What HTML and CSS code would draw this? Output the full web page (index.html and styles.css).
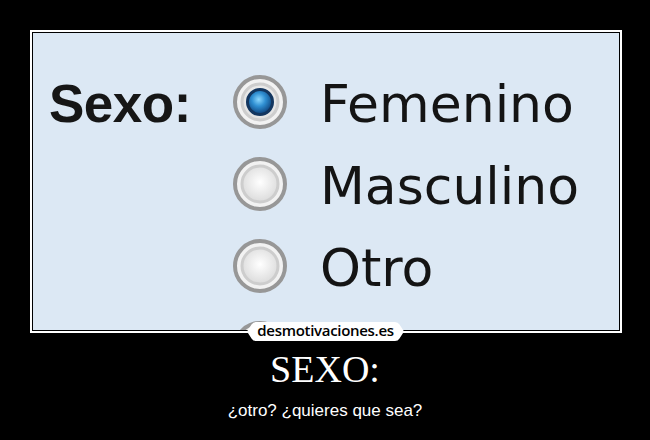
FILE: index.html
```html
<!DOCTYPE html>
<html lang="es">
<head>
<meta charset="utf-8">
<title>SEXO:</title>
<link rel="stylesheet" href="styles.css">
</head>
<body>
<div class="poster">
  <div class="frame">
    <div class="photo">
      <div class="form">
        <div class="label">Sexo:</div>
        <svg class="radio" viewBox="0 0 54 54" width="54" height="54">
          <defs>
            <radialGradient id="in1" cx="50%" cy="45%" r="60%"><stop offset="0" stop-color="#ffffff"/><stop offset="1" stop-color="#dcdcdc"/></radialGradient>
            <radialGradient id="blue" cx="45%" cy="40%" r="60%"><stop offset="0" stop-color="#8cd8ff"/><stop offset="0.45" stop-color="#2f8fd2"/><stop offset="1" stop-color="#0d3f78"/></radialGradient>
          </defs>
          <circle cx="27" cy="27" r="25" fill="#f2f2f2" stroke="#979797" stroke-width="4"/>
          <circle cx="27" cy="27" r="18" fill="url(#in1)" stroke="#cdcdcd" stroke-width="3"/>
          <circle cx="27" cy="27" r="12.5" fill="url(#blue)" stroke="#13365f" stroke-width="3"/>
        </svg>
        <div class="opt">Femenino</div>

        <div class="label"></div>
        <svg class="radio" viewBox="0 0 54 54" width="54" height="54">
          <defs><radialGradient id="in2" cx="50%" cy="45%" r="60%"><stop offset="0" stop-color="#ffffff"/><stop offset="1" stop-color="#d8d8d8"/></radialGradient></defs>
          <circle cx="27" cy="27" r="25" fill="#f2f2f2" stroke="#979797" stroke-width="4"/>
          <circle cx="27" cy="27" r="18" fill="url(#in2)" stroke="#cdcdcd" stroke-width="3"/>
        </svg>
        <div class="opt">Masculino</div>

        <div class="label"></div>
        <svg class="radio" viewBox="0 0 54 54" width="54" height="54">
          <defs><radialGradient id="in3" cx="50%" cy="45%" r="60%"><stop offset="0" stop-color="#ffffff"/><stop offset="1" stop-color="#d8d8d8"/></radialGradient></defs>
          <circle cx="27" cy="27" r="25" fill="#f2f2f2" stroke="#979797" stroke-width="4"/>
          <circle cx="27" cy="27" r="18" fill="url(#in3)" stroke="#cdcdcd" stroke-width="3"/>
        </svg>
        <div class="opt">Otro</div>

        <div class="label"></div>
        <svg class="radio" viewBox="0 0 54 54" width="54" height="54">
          <defs><radialGradient id="in4" cx="50%" cy="45%" r="60%"><stop offset="0" stop-color="#ffffff"/><stop offset="1" stop-color="#d8d8d8"/></radialGradient></defs>
          <circle cx="27" cy="27" r="25" fill="#f2f2f2" stroke="#979797" stroke-width="4"/>
          <circle cx="27" cy="27" r="18" fill="url(#in4)" stroke="#cdcdcd" stroke-width="3"/>
        </svg>
        <div class="opt"></div>
      </div>
    </div>
  </div>
  <div class="logo">
    <svg class="logo-bg" viewBox="0 0 157 19" width="157" height="19">
      <path d="M9 0 H148 Q151 0 152.5 2.5 L157 9.5 L152.5 16.5 Q151 19 148 19 H9 Q6 19 4.5 16.5 L0 9.5 L4.5 2.5 Q6 0 9 0 Z" fill="#ffffff"/>
    </svg>
    <span class="logo-text">desmotivaciones.es</span>
  </div>
  <h1 class="title">SEXO:</h1>
  <p class="subtitle">¿otro? ¿quieres que sea?</p>
</div>
</body>
</html>
```
FILE: styles.css
```css
html, body {
  margin: 0;
  padding: 0;
  background: #000;
}
body {
  width: 650px;
  height: 440px;
  overflow: hidden;
}
.poster {
  position: relative;
  width: 650px;
  height: 440px;
  padding-top: 30px;
  box-sizing: border-box;
  display: flex;
  flex-direction: column;
  align-items: flex-start;
}
.frame {
  margin-left: 30px;
  border: 2px solid #fff;
  padding: 1px;
  background: #000;
}
.photo {
  width: 586px;
  height: 297px;
  background: #dce8f4;
  overflow: hidden;
  box-sizing: border-box;
  padding: 30px 0 0 16px;
}
.form {
  display: grid;
  grid-template-columns: 154px 54px auto;
  grid-auto-rows: 82px;
  column-gap: 30px;
  align-items: center;
  filter: blur(0.7px);
}
.label {
  font-family: "Liberation Sans", Arial, sans-serif;
  font-weight: bold;
  font-size: 53px;
  line-height: 82px;
  color: #161616;
  letter-spacing: -0.5px;
}
.radio {
  display: block;
  margin-top: -4px;
}
.opt {
  font-family: "DejaVu Sans", Verdana, sans-serif;
  font-size: 52px;
  line-height: 82px;
  color: #141414;
  white-space: nowrap;
  margin-left: 3px;
}
.logo {
  position: absolute;
  left: 247px;
  top: 322px;
  width: 157px;
  height: 19px;
  display: flex;
  align-items: center;
  justify-content: center;
}
.logo-bg {
  position: absolute;
  left: 0;
  top: 0;
}
.logo-text {
  position: relative;
  font-family: "Open Sans", "DejaVu Sans", sans-serif;
  font-size: 15px;
  font-weight: 600;
  line-height: 19px;
  letter-spacing: -0.3px;
  color: #000;
  margin-top: -2px;
}
.title {
  align-self: stretch;
  margin: 14px 0 0;
  font-family: "Liberation Serif", "Times New Roman", serif;
  font-weight: normal;
  font-size: 38px;
  line-height: 44px;
  color: #fff;
  text-align: center;
}
.subtitle {
  align-self: stretch;
  margin: 10px 0 0;
  font-family: "Liberation Sans", Arial, sans-serif;
  font-size: 17px;
  line-height: 20px;
  color: #fff;
  text-align: center;
}
```
